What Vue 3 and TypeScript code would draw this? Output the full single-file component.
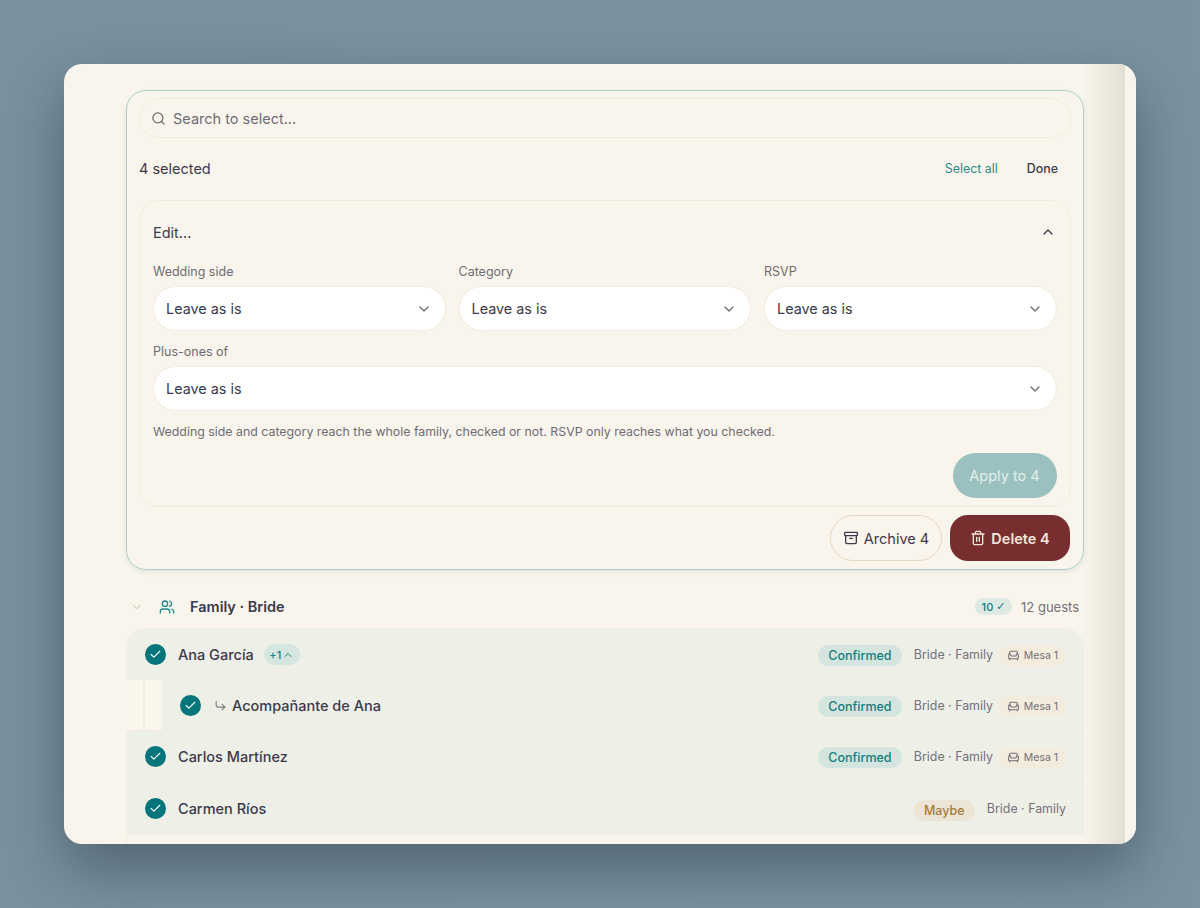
<script setup lang="ts">
interface Guest {
  name: string
  status: string
  side: string
  table?: string
  plus?: boolean
  sub?: boolean
}
const guests: Guest[] = [
  { name: 'Ana García', status: 'Confirmed', side: 'Bride · Family', table: 'Mesa 1', plus: true },
  { name: 'Acompañante de Ana', status: 'Confirmed', side: 'Bride · Family', table: 'Mesa 1', sub: true },
  { name: 'Carlos Martínez', status: 'Confirmed', side: 'Bride · Family', table: 'Mesa 1' },
  { name: 'Carmen Ríos', status: 'Maybe', side: 'Bride · Family' },
]
const fields = ['Wedding side', 'Category', 'RSVP']
</script>

<template>
  <div class="stage">
    <div class="window">
      <div class="main">
        <section class="panel">
          <div class="search">
            <svg class="search-ico" viewBox="0 0 24 24" width="15" height="15"><circle cx="11" cy="11" r="8" /><path d="m21 21-4.300-4.300" /></svg>
            <span>Search to select...</span>
          </div>
          <div class="selbar">
            <span class="count">4 selected</span>
            <div class="selactions">
              <span class="all">Select all</span>
              <span class="done">Done</span>
            </div>
          </div>
          <div class="edit">
            <div class="edit-head">
              <span>Edit...</span>
              <svg viewBox="0 0 24 24" width="16" height="16" class="up"><path d="m6 15 6-6 6 6" /></svg>
            </div>
            <div class="fields">
              <div v-for="f in fields" :key="f" class="field">
                <label>{{ f }}</label>
                <div class="select">
                  <span>Leave as is</span>
                  <svg viewBox="0 0 24 24" width="16" height="16"><path d="m6 9 6 6 6-6" /></svg>
                </div>
              </div>
            </div>
            <div class="field wide">
              <label>Plus-ones of</label>
              <div class="select">
                <span>Leave as is</span>
                <svg viewBox="0 0 24 24" width="16" height="16"><path d="m6 9 6 6 6-6" /></svg>
              </div>
            </div>
            <p class="hint">Wedding side and category reach the whole family, checked or not. RSVP only reaches what you checked.</p>
            <div class="apply-row"><button class="apply">Apply to 4</button></div>
          </div>
          <div class="bulk">
            <button class="archive">
              <svg viewBox="0 0 24 24" width="16" height="16"><rect x="2.500" y="3.500" width="19" height="5" rx="1" /><path d="M4 8.500v10a2 2 0 0 0 2 2h12a2 2 0 0 0 2-2v-10" /><path d="M10 12.500h4" /></svg>
              Archive 4
            </button>
            <button class="delete">
              <svg viewBox="0 0 24 24" width="16" height="16"><path d="M3 6h18" /><path d="M19 6v14a2 2 0 0 1-2 2H7a2 2 0 0 1-2-2V6" /><path d="M8 6V4a2 2 0 0 1 2-2h4a2 2 0 0 1 2 2v2" /><path d="M10 11v6" /><path d="M14 11v6" /></svg>
              Delete 4
            </button>
          </div>
        </section>

        <div class="group-head">
          <svg class="g-chev" viewBox="0 0 24 24" width="14" height="14"><path d="m6 9 6 6 6-6" /></svg>
          <svg class="g-ico" viewBox="0 0 24 24" width="16" height="16"><path d="M16 21v-2a4 4 0 0 0-4-4H6a4 4 0 0 0-4 4v2" /><circle cx="9" cy="7" r="4" /><path d="M22 21v-2a4 4 0 0 0-3-3.870" /><path d="M16 3.130a4 4 0 0 1 0 7.750" /></svg>
          <span class="g-title">Family · Bride</span>
          <span class="g-badge">10 <span class="tick">✓</span></span>
          <span class="g-count">12 guests</span>
        </div>

        <div class="list">
          <div v-for="g in guests" :key="g.name" class="row" :class="{ sub: g.sub }">
            <template v-if="g.sub">
              <span class="rail" />
              <span class="rail second" />
            </template>
            <span class="check">
              <svg viewBox="0 0 24 24" width="13" height="13"><path d="M20 6 9 17l-5-5" /></svg>
            </span>
            <svg v-if="g.sub" class="arrow" viewBox="0 0 24 24" width="13" height="13"><path d="m15 10 5 5-5 5" /><path d="M4 4v7a4 4 0 0 0 4 4h12" /></svg>
            <span class="name">{{ g.name }}</span>
            <span v-if="g.plus" class="plus">+1
              <svg viewBox="0 0 24 24" width="12" height="12"><path d="m6 15 6-6 6 6" /></svg>
            </span>
            <span class="status" :class="g.status === 'Maybe' ? 'maybe' : 'ok'">{{ g.status }}</span>
            <span class="side">{{ g.side }}</span>
            <span v-if="g.table" class="table">
              <svg viewBox="0 0 24 24" width="13" height="13"><path d="M19 9V6a2 2 0 0 0-2-2H7a2 2 0 0 0-2 2v3" /><path d="M3 16a2 2 0 0 0 2 2h14a2 2 0 0 0 2-2v-5a2 2 0 0 0-4 0v1.500a.5.5 0 0 1-.5.5h-9a.5.5 0 0 1-.5-.5V11a2 2 0 0 0-4 0z" /><path d="M5 18v2" /><path d="M19 18v2" /></svg>
              {{ g.table }}
            </span>
          </div>
          <div class="row ghost" />
        </div>

        <div class="edge" />
      </div>
      <div class="strip" />
    </div>
  </div>
</template>

<style>
html, body { margin: 0; }
</style>

<style scoped>
.stage {
  width: 1200px;
  height: 908px;
  box-sizing: border-box;
  padding: 64px;
  background: linear-gradient(90deg, #7a919f, #7b93a1);
  overflow: hidden;
  font-family: Inter, "Liberation Sans", sans-serif;
  color: #3b3a4c;
}
svg { fill: none; stroke: currentColor; stroke-width: 2; stroke-linecap: round; stroke-linejoin: round; flex: none; }
button { font-family: inherit; cursor: pointer; }
.window {
  height: 780px;
  background: #f9f5ec;
  border-radius: 18px;
  overflow: hidden;
  display: flex;
  box-shadow: 0 25px 60px rgba(30, 45, 60, 0.45);
}
.main {
  flex: 1;
  position: relative;
  overflow: hidden;
  padding: 26px 41px 0 62px;
  min-width: 0;
}
.strip { width: 11px; background: #f9f5ec; }
.edge {
  position: absolute;
  top: 0; bottom: 0; right: 0;
  width: 44px;
  background: linear-gradient(90deg, rgba(224, 222, 210, 0), rgba(224, 222, 210, 0.95));
  pointer-events: none;
}
.panel {
  box-sizing: border-box;
  height: 480px;
  border: 1.5px solid #a9cfc8;
  border-radius: 20px;
  padding: 7px 12.5px 7px 12px;
  box-shadow: 0 2px 5px rgba(60, 90, 90, 0.12);
}
.search {
  height: 40px;
  box-sizing: border-box;
  border: 1px solid #f2ecdc;
  border-radius: 20px;
  display: flex;
  align-items: center;
  gap: 7px;
  padding: 0 11px;
  font-size: 14.5px;
  color: #6f6b73;
}
.search-ico { color: #6f6b73; }
.selbar {
  height: 61px;
  margin-bottom: 1px;
  display: flex;
  justify-content: space-between;
  align-items: center;
}
.count { font-size: 14.5px; color: #3b3a4c; }
.selactions { display: flex; gap: 29px; padding-right: 12.5px; font-size: 12.4px; }
.all { color: #1f8c8c; }
.done { color: #3b3a4c; font-weight: 450; }
.edit {
  box-sizing: border-box;
  height: 307px;
  border: 1px solid #f2ecdc;
  border-radius: 20px;
  padding: 0 13px;
}
.edit-head {
  height: 62px;
  display: flex;
  justify-content: space-between;
  align-items: center;
  font-size: 14.5px;
}
.up { margin-right: 1px; }
.fields { display: grid; grid-template-columns: repeat(3, 1fr); gap: 13px; }
.field label {
  display: block;
  font-size: 12.5px;
  line-height: 18px;
  color: #6f6b73;
  margin-bottom: 5px;
}
.wide { margin-top: 12px; }
.select {
  box-sizing: border-box;
  height: 45px;
  border: 1px solid #f2ecdc;
  background: #fff;
  border-radius: 22.5px;
  display: flex;
  align-items: center;
  justify-content: space-between;
  padding: 0 13px 0 12px;
  font-size: 14.4px;
  color: #3b3a4c;
}
.select svg { color: #6f6b73; }
.hint { margin: 13px 0 0; font-size: 12.36px; line-height: 16px; color: #6f6b73; }
.apply-row { display: flex; justify-content: flex-end; margin-top: 13px; }
.apply {
  width: 104px;
  height: 45px;
  border: 0;
  border-radius: 22.5px;
  background: #9ac1c0;
  color: #e4eeea;
  font-size: 14.5px;
}
.bulk { display: flex; justify-content: flex-end; gap: 8px; margin: 8px 0.5px 0 0; }
.bulk button {
  height: 46px;
  display: flex;
  align-items: center;
  justify-content: center;
  gap: 5px;
  font-size: 14.5px;
}
.archive { width: 112px; border-radius: 23px; border: 1px solid #e3d8c0; background: transparent; color: #3b3a4c; }
.delete { width: 120px; border-radius: 18px; border: 0; background: #782e2e; color: #f5e6dc; font-weight: 600; }
.group-head {
  height: 58px;
  box-sizing: border-box;
  display: flex;
  align-items: center;
  padding: 15px 0 0 4px;
}
.g-chev { color: #d9d4c2; }
.g-ico { color: #1f8c8c; margin-left: 15px; }
.g-title { font-size: 14.5px; font-weight: 600; color: #3b3a4c; margin-left: 15px; }
.g-badge {
  margin-left: auto;
  height: 17px;
  width: 37px;
  border-radius: 9px;
  background: #dfe9e3;
  color: #0f7a7c;
  font-size: 11px;
  font-weight: 500;
  display: flex;
  align-items: center;
  justify-content: center;
  gap: 3px;
}
.tick { font-family: "DejaVu Sans", sans-serif; font-size: 11px; }
.g-count { font-size: 13px; color: #75717a; margin: 0 5px 0 9px; }
.list {
  border-radius: 20px 20px 0 0;
  overflow: hidden;
  border-top: 1px solid #f2ecdc;
}
.row {
  position: relative;
  height: 52px;
  box-sizing: border-box;
  display: flex;
  align-items: center;
  padding: 0 18px 0 19px;
  background: #eeefe7;
  border-bottom: 1px solid #f1eee0;
}
.row:first-child { height: 51px; border-bottom: 0; }
.row.sub { height: 51px; padding-left: 54px; }
.row.ghost { background: #f9f5ec; border-left: 1px solid #f2ecdc; }
.rail { position: absolute; left: 0; top: 0; bottom: 0; width: 17px; background: #faf6ec; }
.rail.second { left: 19px; }
.check {
  width: 21px;
  height: 21px;
  border-radius: 50%;
  background: #04757a;
  color: #fff;
  display: flex;
  align-items: center;
  justify-content: center;
  margin-right: 12px;
  flex: none;
}
.arrow { color: #7d7a80; margin: 0 5px 0 1px; }
.name { font-size: 14.5px; font-weight: 450; color: #3b3a4c; }
.plus {
  margin-left: 10px;
  height: 21px;
  width: 36px;
  border-radius: 11px;
  background: #d5e5df;
  color: #1a8080;
  font-size: 11px;
  font-weight: 500;
  display: flex;
  align-items: center;
  justify-content: center;
  gap: 1px;
}
.status {
  margin-left: auto;
  margin-top: 2px;
  height: 21px;
  border-radius: 11px;
  display: flex;
  align-items: center;
  padding: 0 10.25px;
  font-size: 12.5px;
  font-weight: 450;
}
.ok { background: #d4e5df; color: #127e7e; }
.maybe { background: #ece5d6; color: #a87a3a; margin-top: 4px; }
.side { font-size: 12.4px; color: #75717a; margin-left: 12px; }
.table {
  margin-left: 6px;
  margin-top: 2px;
  height: 20px;
  width: 67px;
  box-sizing: border-box;
  border-radius: 10px;
  background: #f3ebdc;
  color: #75717a;
  font-size: 10.5px;
  display: flex;
  align-items: center;
  justify-content: center;
  gap: 4px;
}
</style>
